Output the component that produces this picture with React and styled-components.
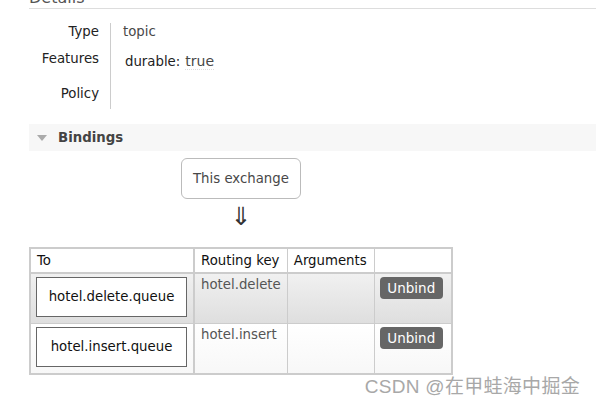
import React from "react";
import styled, {createGlobalStyle} from "styled-components";

const GlobalStyle = createGlobalStyle`
  html, body {
    margin: 0;
    padding: 0;
    background: #fff;
    overflow: hidden;
  }
  body {
    font-family: "DejaVu Sans", Verdana, sans-serif;
    font-size: 13.3px;
    color: #484848;
  }
`;

const Page = styled.div`
  display: flow-root;
  position: relative;
  width: 596px;
  height: 407px;
  padding-left: 29px;
  box-sizing: border-box;
  overflow: hidden;
`;

const SectionTitle = styled.h2`
  margin: -12px 0 0;
  font-size: 16px;
  line-height: 20px;
  font-weight: normal;
  color: #555;
  border-bottom: 1px solid #ddd;
`;

const Facts = styled.table`
  border-collapse: collapse;
  margin-top: 14px;

  th {
    width: 70px;
    padding: 1px 11px 0 0;
    text-align: right;
    vertical-align: top;
    font-weight: normal;
    color: #222;
    line-height: 16px;
    border-right: 1px solid #ccc;
  }
  td {
    padding: 1px 0 0 12px;
    vertical-align: top;
    line-height: 16px;
  }
`;

const FactRow = styled.tr`
  height: ${p => p.h}px;
`;

const Key = styled.span`
  margin-left: 2px;
  color: #222;
`;

const Abbr = styled.span`
  display: inline-block;
  margin-left: 5px;
  padding-top: 3px;
  line-height: 15px;
  font-size: 14px;
  border-bottom: 1px dotted #ddd;
`;

const SectionBar = styled.div`
  display: flex;
  align-items: center;
  gap: 11px;
  height: 27px;
  margin-top: 15px;
  padding-left: 8px;
  background: #f7f7f7;
  font-weight: bold;
  color: #444;
`;

const Caret = styled.span`
  width: 0;
  height: 0;
  border-left: 5px solid transparent;
  border-right: 5px solid transparent;
  border-top: 6px solid #aaa;
`;

const Flow = styled.div`
  display: flex;
  flex-direction: column;
  align-items: center;
  width: 120px;
  margin: 7px 0 0 152px;
`;

const ExchangeBox = styled.div`
  box-sizing: border-box;
  width: 120px;
  height: 41px;
  padding: 0 11px;
  line-height: 39px;
  border: 1px solid #bbb;
  border-radius: 6px;
  white-space: nowrap;
`;

const DownArrow = styled.div`
  font-size: 25px;
  line-height: 28px;
  height: 28px;
  margin: 4px 0 0;
  color: #333;
`;

const Bindings = styled.table`
  margin-top: 16px;
  border-collapse: collapse;
  border: 2px solid #ccc;

  th, td {
    border: 1px solid #ccc;
    text-align: left;
    vertical-align: top;
    line-height: 16px;
    white-space: nowrap;
  }
  th {
    height: 25px;
    padding: 4px 6px 0;
    box-sizing: border-box;
    font-weight: normal;
    color: #111;
    background: #fff;
  }
`;

const HeadRow = styled.tr`
  border-bottom: 2px solid #ccc;
`;

const Row = styled.tr`
  background: ${p => p.alt
    ? "linear-gradient(#f1f1f1, #dedede)"
    : "linear-gradient(#ffffff, #f7f7f7)"};
`;

const HeadTo = styled.th`
  width: 163px;
  border-right-width: 2px !important;
`;

const ToCell = styled.td`
  width: 151px;
  padding: 3px 6px 6px 5px;
  border-right-width: 2px !important;
`;

const QueueBox = styled.div`
  box-sizing: border-box;
  width: 151px;
  height: 40px;
  line-height: 38px;
  text-align: center;
  background: #fff;
  border: 1px solid #666;
  color: #111;
`;

const KeyCell = styled.td`
  width: 91px;
  padding: 3px 6px 0;
  box-sizing: border-box;
  color: #555;
`;

const ArgsCell = styled.td`
  width: 84px;
`;

const ActionCell = styled.td`
  width: 78px;
  padding: 3px 5px 0;
  box-sizing: border-box;
`;

const UnbindButton = styled.button`
  width: 63px;
  height: 22px;
  padding: 0;
  border: none;
  border-radius: 4px;
  background: #666;
  color: #fff;
  font-family: inherit;
  font-size: 13.5px;
  line-height: 22px;
`;

const Watermark = styled.div`
  position: absolute;
  right: 16px;
  top: 377px;
  font-family: "Liberation Sans", "Noto Sans CJK SC", sans-serif;
  font-size: 19px;
  line-height: 20px;
  letter-spacing: 0.3px;
  color: #a8a8a8;
  text-shadow: 0 0 1px #fff, 0 0 1px #fff;
`;

const bindings = [
  {queue: "hotel.delete.queue", key: "hotel.delete"},
  {queue: "hotel.insert.queue", key: "hotel.insert"},
];

export default function App() {
  return (
    <Page>
      <GlobalStyle/>
      <SectionTitle>Details</SectionTitle>
      <Facts>
        <tbody>
          <FactRow h={27}>
            <th>Type</th>
            <td>topic</td>
          </FactRow>
          <FactRow h={35}>
            <th>Features</th>
            <td><Key>durable:</Key><Abbr>true</Abbr></td>
          </FactRow>
          <FactRow h={24}>
            <th>Policy</th>
            <td></td>
          </FactRow>
        </tbody>
      </Facts>

      <SectionBar>
        <Caret/>
        Bindings
      </SectionBar>

      <Flow>
        <ExchangeBox>This exchange</ExchangeBox>
        <DownArrow>⇓</DownArrow>
      </Flow>

      <Bindings>
        <thead>
          <HeadRow>
            <HeadTo>To</HeadTo>
            <th>Routing key</th>
            <th>Arguments</th>
            <th></th>
          </HeadRow>
        </thead>
        <tbody>
          {bindings.map((b, i) => (
            <Row key={b.queue} alt={i % 2 === 0}>
              <ToCell><QueueBox>{b.queue}</QueueBox></ToCell>
              <KeyCell>{b.key}</KeyCell>
              <ArgsCell/>
              <ActionCell><UnbindButton>Unbind</UnbindButton></ActionCell>
            </Row>
          ))}
        </tbody>
      </Bindings>

      <Watermark>CSDN @在甲蛙海中掘金</Watermark>
    </Page>
  );
}
